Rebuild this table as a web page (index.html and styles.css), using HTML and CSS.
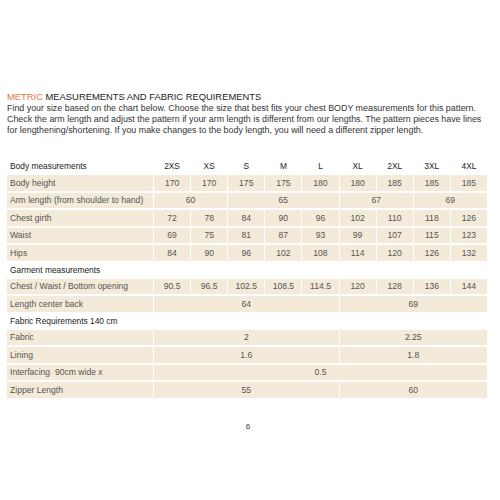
FILE: index.html
```html
<!DOCTYPE html>
<html lang="en">
<head>
  <meta charset="UTF-8" />
  <title>Metric measurements and fabric requirements</title>
  <link rel="stylesheet" href="styles.css">
</head>
<body>
  <div class="page">
    <!-- Intro -->
    <h1 class="title"><span class="accent">METRIC</span> MEASUREMENTS AND FABRIC REQUIREMENTS</h1>
    <p class="intro">Find your size based on the chart below. Choose the size that best fits your chest BODY measurements for this pattern.<br>
      Check the arm length and adjust the pattern if your arm length is different from our lengths. The pattern pieces have lines<br>
      for lengthening/shortening. If you make changes to the body length, you will need a different zipper length.</p>

    <!-- Size chart -->
    <table class="chart">
      <tr class="section">
        <th class="label">Body measurements</th>
        <th>2XS</th><th>XS</th><th>S</th><th>M</th><th>L</th><th>XL</th><th>2XL</th><th>3XL</th><th>4XL</th>
      </tr>
      <tr>
        <td class="label">Body height</td>
        <td>170</td><td>170</td><td>175</td><td>175</td><td>180</td><td>180</td><td>185</td><td>185</td><td>185</td>
      </tr>
      <tr>
        <td class="label">Arm length (from shoulder to hand)</td>
        <td colspan="2">60</td><td colspan="3">65</td><td colspan="2">67</td><td colspan="2">69</td>
      </tr>
      <tr>
        <td class="label">Chest girth</td>
        <td>72</td><td>78</td><td>84</td><td>90</td><td>96</td><td>102</td><td>110</td><td>118</td><td>126</td>
      </tr>
      <tr>
        <td class="label">Waist</td>
        <td>69</td><td>75</td><td>81</td><td>87</td><td>93</td><td>99</td><td>107</td><td>115</td><td>123</td>
      </tr>
      <tr>
        <td class="label">Hips</td>
        <td>84</td><td>90</td><td>96</td><td>102</td><td>108</td><td>114</td><td>120</td><td>126</td><td>132</td>
      </tr>

      <tr class="section">
        <th class="label" colspan="10">Garment measurements</th>
      </tr>
      <tr>
        <td class="label">Chest / Waist / Bottom opening</td>
        <td>90.5</td><td>96.5</td><td>102.5</td><td>108.5</td><td>114.5</td><td>120</td><td>128</td><td>136</td><td>144</td>
      </tr>
      <tr>
        <td class="label">Length center back</td>
        <td colspan="5">64</td><td colspan="4">69</td>
      </tr>

      <tr class="section">
        <th class="label" colspan="10">Fabric Requirements 140 cm</th>
      </tr>
      <tr>
        <td class="label">Fabric</td>
        <td colspan="5">2</td><td colspan="4">2.25</td>
      </tr>
      <tr>
        <td class="label">Lining</td>
        <td colspan="5">1.6</td><td colspan="4">1.8</td>
      </tr>
      <tr>
        <td class="label">Interfacing&nbsp; 90cm wide x</td>
        <td colspan="9">0.5</td>
      </tr>
      <tr>
        <td class="label">Zipper Length</td>
        <td colspan="5">55</td><td colspan="4">60</td>
      </tr>
    </table>

    <div class="page-number">6</div>
  </div>
</body>
</html>
```

FILE: styles.css
```css
/* Base */
* {
  margin: 0;
  padding: 0;
  box-sizing: border-box;
}

body {
  background-color: #fff;
  color: #333;
  font-family: "Liberation Sans", Arial, sans-serif;
}

.page {
  padding: 91px 4px 0 7px;
}

/* Intro text */
.title {
  font-size: 9.4px;
  font-weight: normal;
  line-height: 12px;
  color: #222;
}

.accent {
  color: #e8773d;
}

.intro {
  font-size: 8.9px;
  line-height: 11px;
  color: #333;
  white-space: nowrap;
}

/* Size chart */
.chart {
  width: 482px;
  margin-top: 21px;
  border-collapse: separate;
  border-spacing: 1px 2px;
  margin-left: -1px;
  font-size: 8.6px;
  table-layout: fixed;
}

.chart th,
.chart td {
  height: 15.5px;
  padding: 0;
  text-align: center;
  font-weight: normal;
  white-space: nowrap;
}

.chart th {
  color: #222;
  font-size: 8.4px;
}

.chart td {
  background-color: #f3ead9;
  color: #555;
}

.chart .label {
  width: 146px;
  text-align: left;
  padding-left: 3px;
}

.section th {
  height: 14px;
}

.page-number {
  text-align: center;
  margin-top: 22px;
  font-size: 8px;
  color: #333;
  padding-right: 7px;
}
```
